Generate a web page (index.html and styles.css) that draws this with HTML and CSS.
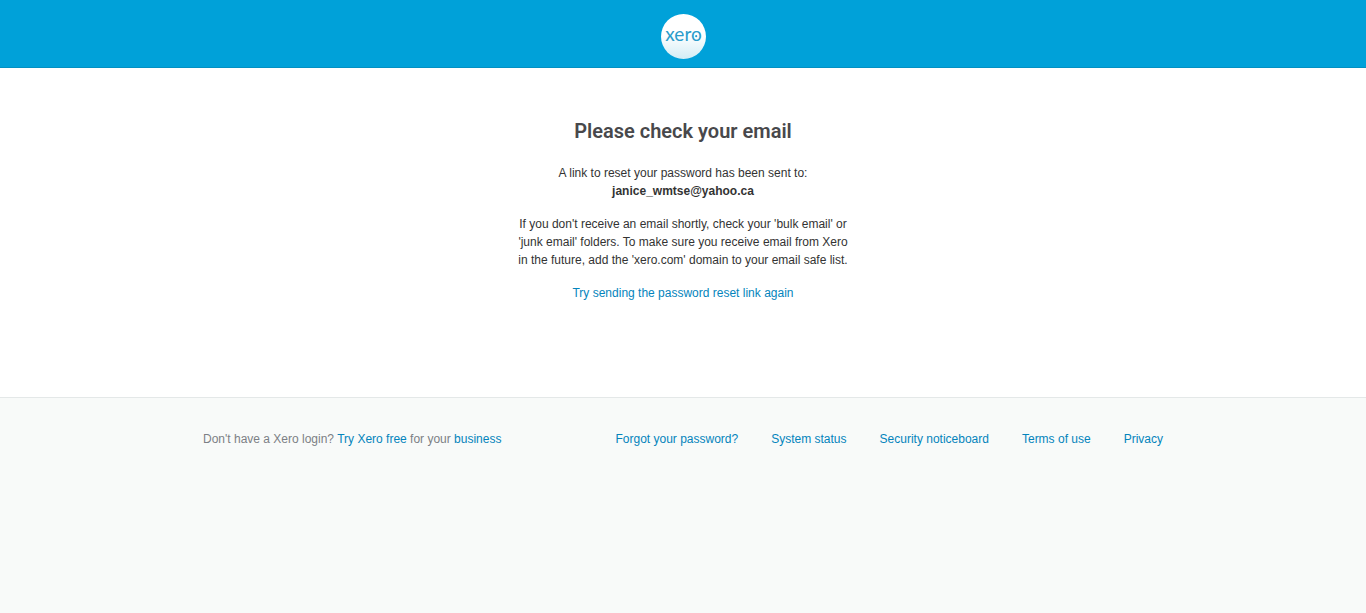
FILE: index.html
```html
<!DOCTYPE html>
<html lang="en">
<head>
<meta charset="utf-8">
<meta name="viewport" content="width=device-width, initial-scale=1">
<title>Please check your email</title>
<link rel="stylesheet" href="styles.css">
</head>
<body>
<header class="header">
  <a class="logo" href="#">
    <svg class="logo-mark" viewBox="0 0 45 45" role="img" aria-label="Xero">
      <defs>
        <linearGradient id="disc" x1="0" y1="0" x2="0" y2="1">
          <stop offset="0.45" stop-color="#ffffff"/>
          <stop offset="1" stop-color="#d3edf5"/>
        </linearGradient>
      </defs>
      <circle cx="22.5" cy="22.5" r="22.5" fill="url(#disc)"/>
      <text class="logo-word" x="22.5" y="27" text-anchor="middle">xero</text>
      <circle cx="35.2" cy="22.2" r="1.1" fill="#2b9ccb"/>
    </svg>
  </a>
</header>
<main class="content">
  <h1 class="title">Please check your email</h1>
  <p class="text">A link to reset your password has been sent to:<br><strong>janice_wmtse@yahoo.ca</strong></p>
  <p class="text">If you don't receive an email shortly, check your 'bulk email' or 'junk email' folders. To make sure you receive email from Xero in the future, add the 'xero.com' domain to your email safe list.</p>
  <p class="text"><a class="link" href="#">Try sending the password reset link again</a></p>
</main>
<footer class="footer">
  <div class="footer-inner">
    <p class="signup">Don't have a Xero login? <a class="link" href="#">Try Xero free</a> for your <a class="link" href="#">business</a></p>
    <nav class="footer-nav">
      <a class="link" href="#">Forgot your password?</a>
      <a class="link" href="#">System status</a>
      <a class="link" href="#">Security noticeboard</a>
      <a class="link" href="#">Terms of use</a>
      <a class="link" href="#">Privacy</a>
    </nav>
  </div>
</footer>
</body>
</html>
```
FILE: styles.css
```css
* {
  box-sizing: border-box;
}

body {
  display: flex;
  flex-direction: column;
  min-height: 100vh;
  margin: 0;
  background: #fff;
  color: #333;
  font: 12px/18px "Liberation Sans", Arial, sans-serif;
}

.header {
  display: flex;
  justify-content: center;
  padding: 14px 0 8px;
  border-bottom: 1px solid #0290c2;
  background: #00a1d9;
}

.logo,
.logo-mark {
  display: block;
}

.logo-mark {
  width: 45px;
  height: 45px;
}

.logo-word {
  fill: #2b9ccb;
  font: 19px Lato, sans-serif;
}

.content {
  width: 100%;
  max-width: 340px;
  margin: 0 auto;
  padding: 48px 4px 80px;
  text-align: center;
}

.title {
  margin: 0 0 18px;
  color: #48484b;
  font: 600 20px/30px Roboto, sans-serif;
}

.text {
  margin: 0 0 15px;
}

.link {
  color: #0484bc;
  text-decoration: none;
}

.footer {
  flex: 1;
  padding: 32px 16px;
  border-top: 1px solid #e4e8e8;
  background: #f8faf9;
}

.footer-inner {
  display: flex;
  flex-wrap: wrap;
  justify-content: space-between;
  gap: 16px;
  max-width: 960px;
  margin: 0 auto;
}

.signup {
  margin: 0;
  color: #7c7f85;
}

.footer-nav {
  display: flex;
  flex-wrap: wrap;
  gap: 8px 33px;
}
```
